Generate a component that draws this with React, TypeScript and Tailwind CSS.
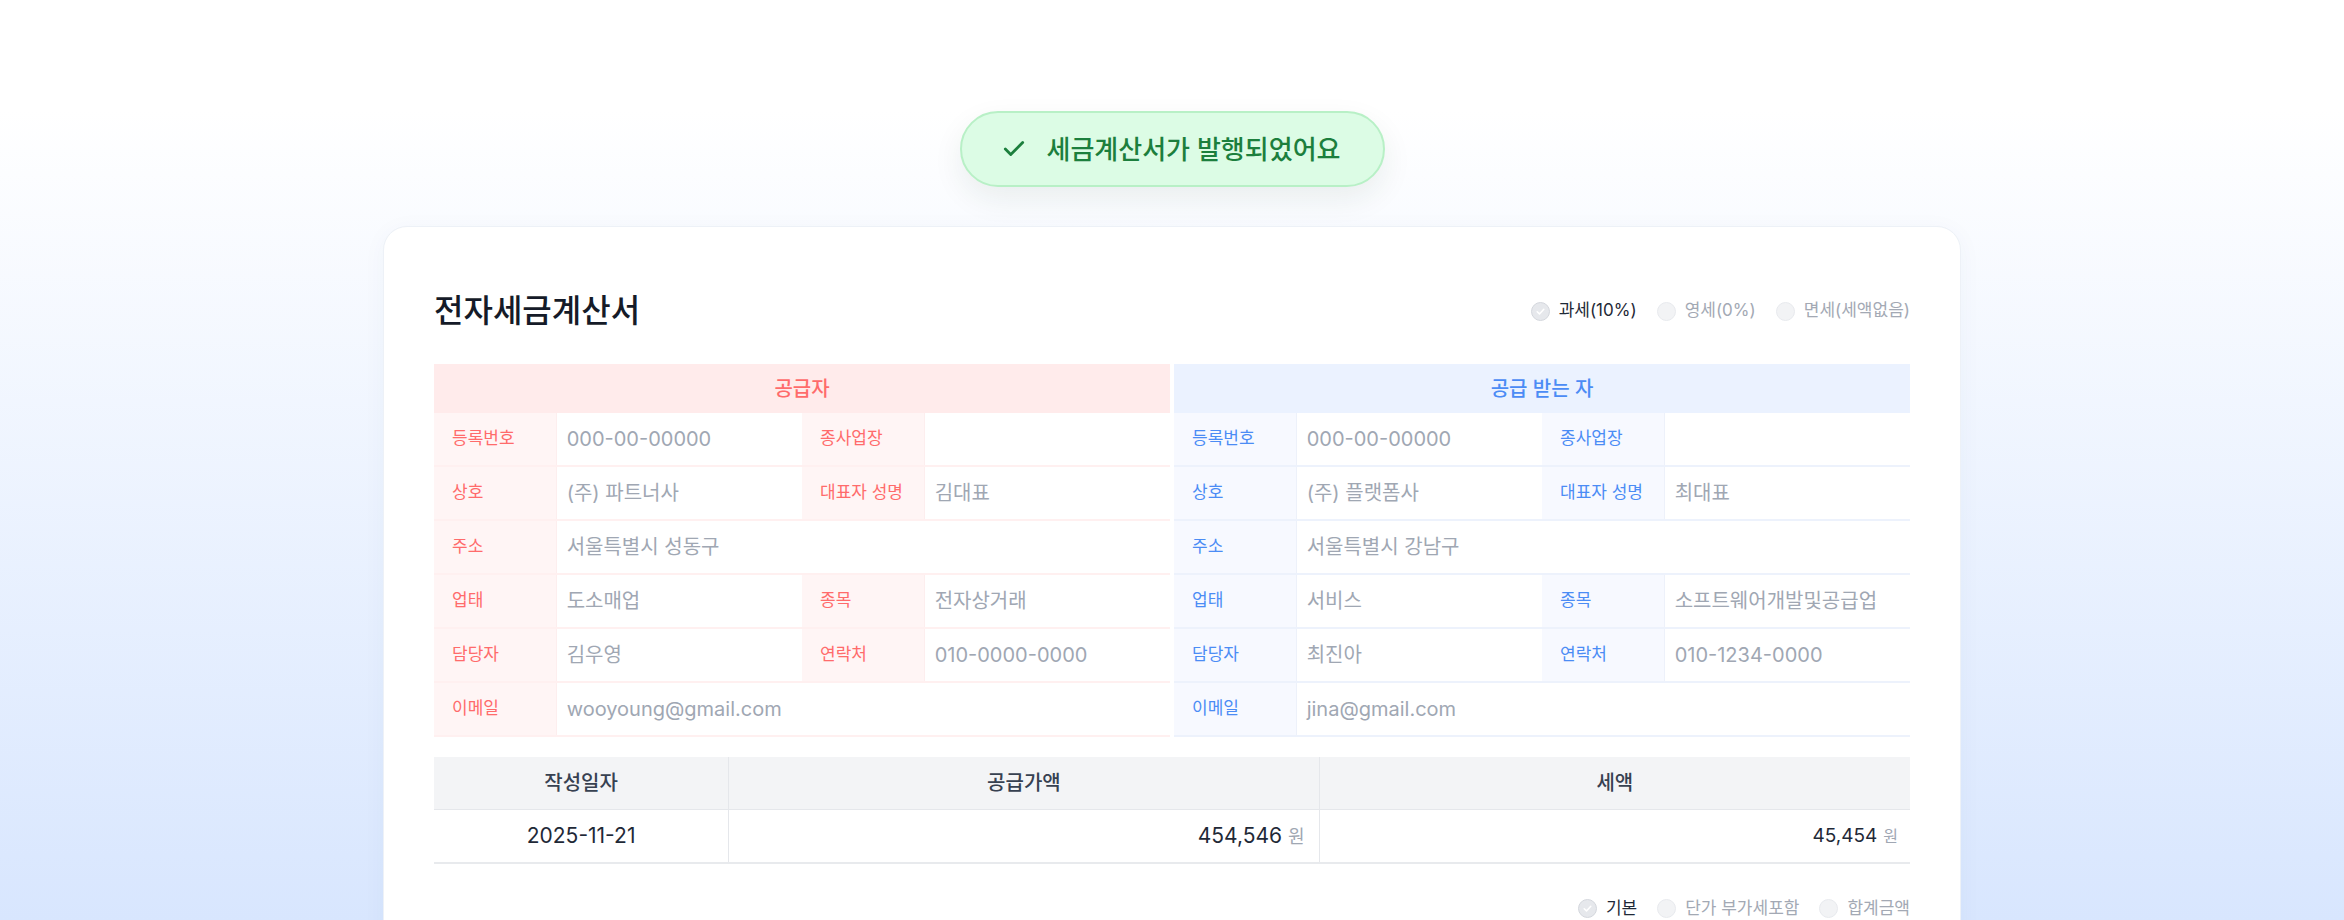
import { Check } from "lucide-react"

type Field = { label: string; value: string }
type Row = Field[]

const supplierRows: Row[] = [
  [
    { label: "등록번호", value: "000-00-00000" },
    { label: "종사업장", value: "" },
  ],
  [
    { label: "상호", value: "(주) 파트너사" },
    { label: "대표자 성명", value: "김대표" },
  ],
  [{ label: "주소", value: "서울특별시 성동구" }],
  [
    { label: "업태", value: "도소매업" },
    { label: "종목", value: "전자상거래" },
  ],
  [
    { label: "담당자", value: "김우영" },
    { label: "연락처", value: "010-0000-0000" },
  ],
  [{ label: "이메일", value: "wooyoung@gmail.com" }],
]

const receiverRows: Row[] = [
  [
    { label: "등록번호", value: "000-00-00000" },
    { label: "종사업장", value: "" },
  ],
  [
    { label: "상호", value: "(주) 플랫폼사" },
    { label: "대표자 성명", value: "최대표" },
  ],
  [{ label: "주소", value: "서울특별시 강남구" }],
  [
    { label: "업태", value: "서비스" },
    { label: "종목", value: "소프트웨어개발및공급업" },
  ],
  [
    { label: "담당자", value: "최진아" },
    { label: "연락처", value: "010-1234-0000" },
  ],
  [{ label: "이메일", value: "jina@gmail.com" }],
]

function Radio({ label, selected }: { label: string; selected?: boolean }) {
  return (
    <div className="flex items-center gap-[9px]">
      <span
        className={
          selected
            ? "flex h-[19px] w-[19px] items-center justify-center rounded-full border border-[#d4d7dd] bg-[#e6e8ec]"
            : "flex h-[19px] w-[19px] items-center justify-center rounded-full border border-[#e8eaee] bg-[#f2f3f5]"
        }
      >
        {selected && (
          <svg width="11" height="11" viewBox="0 0 10 10" fill="none">
            <path d="M2 5.2 4.1 7.2 8 3" stroke="#ffffff" strokeWidth="1.4" strokeLinecap="round" strokeLinejoin="round" />
          </svg>
        )}
      </span>
      <span className={selected ? "text-[17px] text-[#1f2937]" : "text-[17px] text-[#a3a9b4]"}>{label}</span>
    </div>
  )
}

function Party({
  title,
  rows,
  tone,
}: {
  title: string
  rows: Row[]
  tone: "red" | "blue"
}) {
  const red = tone === "red"
  const headCls = red
    ? "flex h-[49px] items-center justify-center bg-[#ffebeb] text-[20px] font-medium text-[#ff6b6b]"
    : "flex h-[49px] items-center justify-center bg-[#ebf2ff] text-[20px] font-medium text-[#4b8cf5]"
  const rowCls = red
    ? "grid h-[54px] grid-cols-[1fr_2fr_1fr_2fr] border-b-2 border-[#fff0f0]"
    : "grid h-[54px] grid-cols-[1fr_2fr_1fr_2fr] border-b-2 border-[#edf2fc]"
  const labelCls = red
    ? "flex items-center border-r border-[#fdeeee] bg-[#fff5f5] px-[18px] text-[17px] text-[#ff6b6b]"
    : "flex items-center border-r border-[#edf1fa] bg-[#f7f9ff] px-[18px] text-[17px] text-[#4b8cf5]"

  return (
    <div className="flex-1">
      <div className={headCls}>{title}</div>
      {rows.map((row, i) => (
        <div key={i} className={rowCls}>
          {row.map((f, j) => (
            <div key={j} className="contents">
              <div className={labelCls}>{f.label}</div>
              <div
                className={
                  row.length === 1
                    ? "col-span-3 flex items-center px-[10px] text-[20px] text-[#a0a7b3]"
                    : "flex items-center px-[10px] text-[20px] text-[#a0a7b3]"
                }
              >
                {f.value}
              </div>
            </div>
          ))}
        </div>
      ))}
    </div>
  )
}

export default function App() {
  return (
    <div className="flex h-[920px] w-full flex-col items-center overflow-hidden bg-[linear-gradient(180deg,#ffffff_0%,#ffffff_12%,#d8e6fe_100%)] pt-[111px] font-[Inter,'Noto_Sans_CJK_KR',sans-serif]">
      {/* toast */}
      <div className="flex h-[76px] w-[425px] shrink-0 items-center gap-[20px] rounded-full border-2 border-[#b8f0c6] bg-[#dcfce5] pl-[39px] shadow-[0_12px_30px_rgba(30,60,40,0.08)]">
        <Check className="h-[26px] w-[26px] text-[#1c7f3d]" strokeWidth={2.6} />
        <span className="text-[26px] font-medium text-[#1c7f3d]">세금계산서가 발행되었어요</span>
      </div>

      {/* card */}
      <div className="mt-[39px] w-[1578px] shrink-0 rounded-[24px] border border-[#edf1f7] bg-white px-[50px] pb-10 pt-[64px] shadow-[0_4px_24px_rgba(60,80,120,0.04)]">
        <div className="flex h-[40px] items-center justify-between">
          <h1 className="text-[32px] font-medium text-[#151b28]">전자세금계산서</h1>
          <div className="flex items-center gap-[20px]">
            <Radio label="과세(10%)" selected />
            <Radio label="영세(0%)" />
            <Radio label="면세(세액없음)" />
          </div>
        </div>

        <div className="mt-[33px] flex gap-1">
          <Party title="공급자" rows={supplierRows} tone="red" />
          <Party title="공급 받는 자" rows={receiverRows} tone="blue" />
        </div>

        <div className="mt-[20px]">
          <div className="grid h-[53px] grid-cols-[1fr_2fr_2fr] border-b border-[#e5e7eb] bg-[#f3f4f6] text-[20px] font-medium text-[#374151]">
            <div className="flex items-center justify-center border-r border-[#e5e7eb]">작성일자</div>
            <div className="flex items-center justify-center border-r border-[#e5e7eb]">공급가액</div>
            <div className="flex items-center justify-center">세액</div>
          </div>
          <div className="grid h-[54px] grid-cols-[1fr_2fr_2fr] border-b-2 border-[#e8eaed] text-[#1f2937]">
            <div className="flex items-center justify-center border-r border-[#e5e7eb] text-[21px]">2025-11-21</div>
            <div className="flex items-center justify-end gap-[6px] border-r border-[#e5e7eb] pr-[14px]">
              <span className="text-[21px]">454,546</span>
              <span className="text-[18px] text-[#a0a7b3]">원</span>
            </div>
            <div className="flex items-center justify-end gap-[6px] pr-[12px]">
              <span className="text-[19px]">45,454</span>
              <span className="text-[16px] text-[#a0a7b3]">원</span>
            </div>
          </div>
        </div>

        <div className="mt-[32px] flex justify-end gap-[20px]">
          <Radio label="기본" selected />
          <Radio label="단가 부가세포함" />
          <Radio label="합계금액" />
        </div>
      </div>
    </div>
  )
}
